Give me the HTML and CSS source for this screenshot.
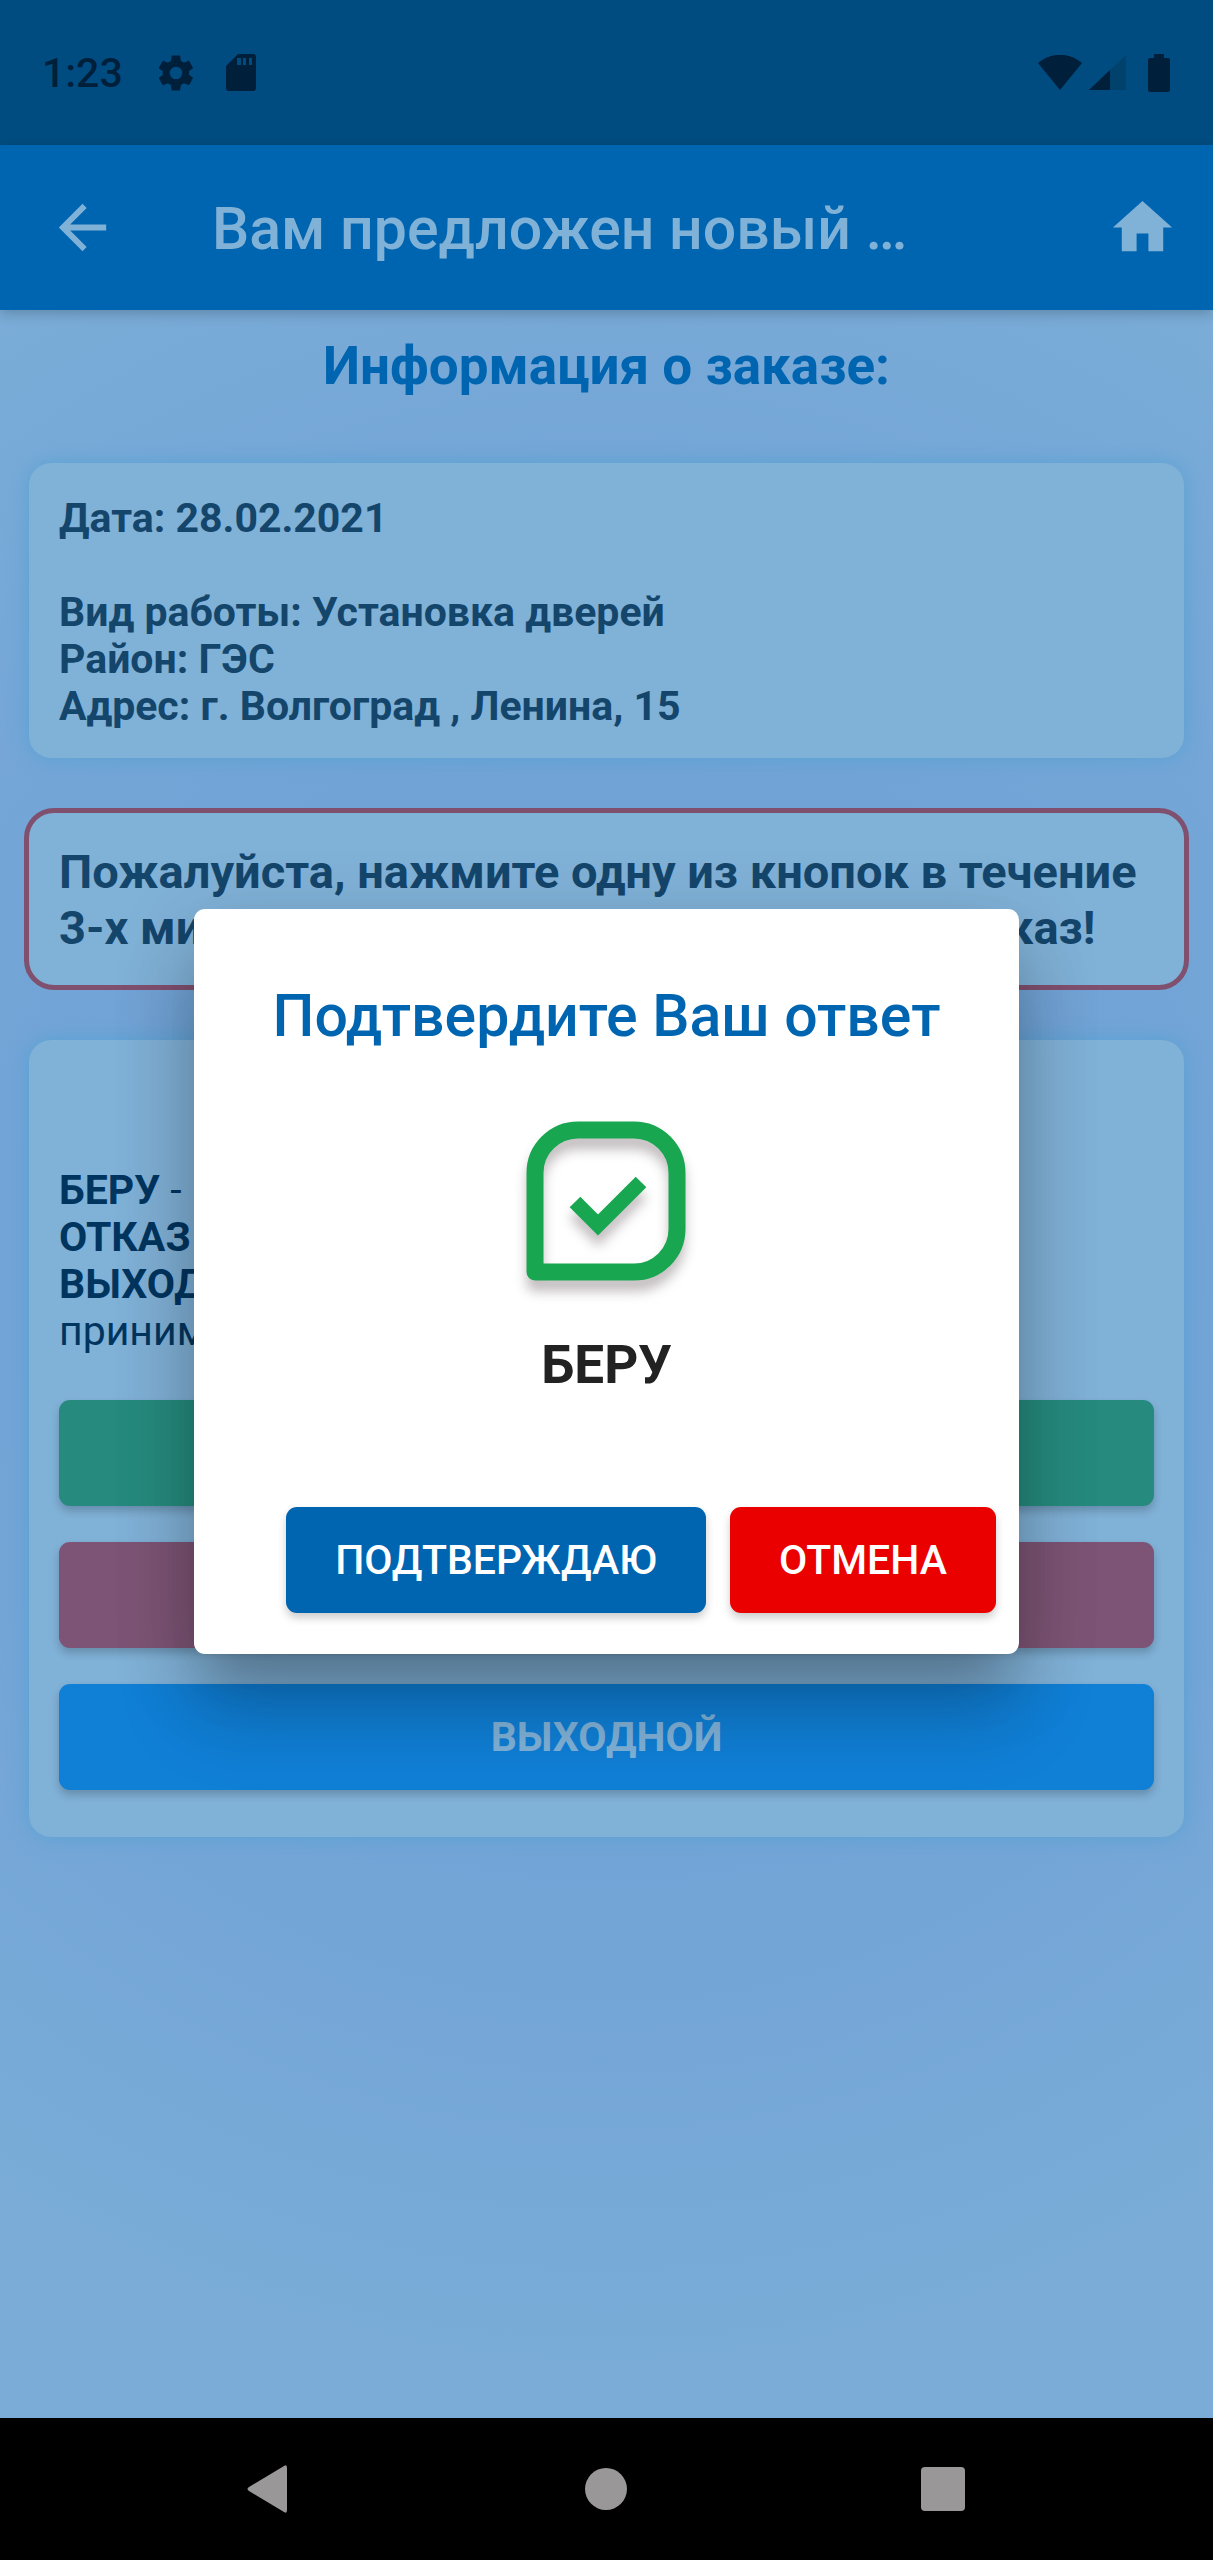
FILE: index.html
```html
<!DOCTYPE html>
<html lang="ru">
<head>
  <meta charset="UTF-8">
  <meta name="viewport" content="width=device-width, initial-scale=1.0">
  <title>Вам предложен новый заказ</title>
  <link rel="stylesheet" href="styles.css">
</head>
<body>
  <div class="status-bar">
    <span class="clock">1:23</span>
    <svg class="gear" viewBox="0 0 24 24"><path d="M19.400 13c0-.3.1-.6.1-1s0-.7-.1-1l2.100-1.600c.2-.2.2-.4.1-.6l-2-3.500c-.1-.2-.4-.3-.6-.2l-2.500 1c-.5-.4-1.100-.7-1.700-1l-.4-2.600c0-.3-.2-.5-.4-.5h-4c-.3 0-.5.2-.5.5l-.4 2.600c-.6.3-1.200.6-1.700 1l-2.500-1c-.2-.1-.5 0-.6.2l-2 3.500c-.1.2-.1.5.1.6L4.500 11c0 .3-.1.7-.1 1s0 .7.1 1l-2.100 1.600c-.2.200-.2.400-.1.600l2 3.500c.1.200.4.300.6.200l2.500-1c.5.400 1.100.700 1.700 1l.4 2.600c0 .3.200.5.500.5h4c.2 0 .4-.2.400-.5l.4-2.600c.6-.3 1.200-.6 1.700-1l2.500 1c.2.1.5 0 .6-.2l2-3.500c.1-.2.1-.4-.1-.6zM12 15.600a3.600 3.600 0 1 1 0-7.200 3.600 3.600 0 0 1 0 7.200z"/></svg>
    <svg class="sd-card" viewBox="0 0 30 37"><path fill-rule="evenodd" d="M12 0h15a3 3 0 0 1 3 3v31a3 3 0 0 1-3 3H3a3 3 0 0 1-3-3V12zM11 4v7h4V4zm6 0v7h3V4zm6 0v7h3V4z"/></svg>
    <svg class="wifi" viewBox="0 0 44 35"><path d="M0 8C13-3 31-3 44 8L22 35z"/></svg>
    <svg class="signal" viewBox="0 0 37 35"><path class="signal-rest" d="M37 0v35H0z"/><path d="M21 15v20H0z"/></svg>
    <svg class="battery" viewBox="0 0 22 38"><path d="M6 0h10v4h4a2 2 0 0 1 2 2v30a2 2 0 0 1-2 2H2a2 2 0 0 1-2-2V6a2 2 0 0 1 2-2h4z"/></svg>
  </div>

  <header class="app-bar">
    <button class="icon-button" aria-label="Назад">
      <svg viewBox="0 0 24 24"><path d="M20 11H7.830l5.590-5.590L12 4l-8 8 8 8 1.410-1.410L7.830 13H20v-2z"/></svg>
    </button>
    <h1>Вам предложен новый …</h1>
    <a class="icon-button" href="#" aria-label="На главную">
      <svg viewBox="0 0 24 24"><path d="M10 20v-6h4v6h5v-8h3L12 3 2 12h3v8z"/></svg>
    </a>
  </header>

  <main class="order">
    <h2 class="order-title">Информация о заказе:</h2>

    <section class="card info">
      <p>Дата: 28.02.2021</p>
      <br>
      <p>Вид работы: Установка дверей</p>
      <p>Район: ГЭС</p>
      <p>Адрес: г. Волгоград , Ленина, 15</p>
    </section>

    <p class="notice">Пожалуйста, нажмите одну из кнопок в течение 3-х минут, иначе Вы не получите новый заказ!</p>

    <section class="card answers">
      <h3>Варианты ответа:</h3>
      <p><b>БЕРУ</b> - Вы берёте заказ</p>
      <p><b>ОТКАЗ</b> - Вы не берёте заказ</p>
      <p><b>ВЫХОДНОЙ</b> - сегодня Вы не</p>
      <p>принимаете заказы</p>
      <div class="answer-buttons">
        <button class="button take">БЕРУ</button>
        <button class="button refuse">ОТКАЗ</button>
        <button class="button day-off">ВЫХОДНОЙ</button>
      </div>
    </section>

    <div class="overlay">
      <div class="dialog" role="dialog" aria-modal="true" aria-labelledby="dialogTitle">
        <h2 id="dialogTitle">Подтвердите Ваш ответ</h2>
        <svg class="check" viewBox="0 0 160 160">
          <path d="M9 151V52A43 43 0 0 1 52 9h56a43 43 0 0 1 43 43v56a43 43 0 0 1-43 43z"/>
          <path d="M49 81l23 23 43-43" stroke-width="15" stroke-linejoin="miter"/>
        </svg>
        <p class="choice">БЕРУ</p>
        <div class="dialog-buttons">
          <button class="button confirm">ПОДТВЕРЖДАЮ</button>
          <button class="button cancel">ОТМЕНА</button>
        </div>
      </div>
    </div>
  </main>

  <nav class="nav-bar">
    <button aria-label="Назад"><svg viewBox="0 0 48 48"><path d="M42 3v42q0 4-3 2L4 26q-3-2 0-4L39 1q3-2 3 2z"/></svg></button>
    <button aria-label="Домой"><svg viewBox="0 0 48 48"><circle cx="24" cy="24" r="21"/></svg></button>
    <button aria-label="Обзор"><svg viewBox="0 0 48 48"><rect x="2" y="2" width="44" height="44" rx="4"/></svg></button>
  </nav>
</body>
</html>
```

FILE: styles.css
```css
* {
  box-sizing: border-box;
  margin: 0;
  padding: 0;
}
body {
  display: flex;
  flex-direction: column;
  min-height: 100vh;
  font-family: Roboto, sans-serif;
  font-size: 41px;
  line-height: 47px;
  background: #79aad7;
}
button {
  font-family: inherit;
  border: none;
  cursor: pointer;
}

/* status bar */
.status-bar {
  display: flex;
  align-items: center;
  height: 145px;
  padding: 0 43px 0 42px;
  background: #004c80;
  color: #001f3b;
  fill: #001f3b;
}
.clock {
  padding-top: 2px;
  margin-right: 32px;
  font-weight: 500;
}
.gear {
  width: 42px;
  height: 42px;
}
.sd-card {
  width: 30px;
  height: 37px;
  margin-left: 29px;
}
.wifi {
  width: 44px;
  height: 35px;
  margin-left: auto;
}
.signal {
  width: 37px;
  height: 35px;
  margin: 0 22px 0 7px;
}
.signal-rest {
  fill: #00426b;
}
.battery {
  width: 22px;
  height: 38px;
}

/* app bar */
.app-bar {
  display: flex;
  align-items: center;
  height: 165px;
  padding: 0 35px 0 47px;
  background: #0065b1;
  color: #80b2d8;
  box-shadow: 0 4px 12px rgba(0, 0, 0, 0.2);
  z-index: 1;
}
.app-bar h1 {
  flex: 1;
  padding-top: 2px;
  margin-left: 94px;
  font-size: 59px;
  line-height: 70px;
  font-weight: 500;
}
.icon-button {
  width: 71px;
  height: 71px;
  background: none;
}
.icon-button svg {
  display: block;
  fill: #80b2d8;
}

/* order */
.order {
  position: relative;
  flex: 1;
  padding: 25px 29px;
  background: radial-gradient(circle at 50% 45%, #6d9fd4, #74a5d7 55%, #7aacd7 85%);
}
.order-title {
  margin-bottom: 66px;
  font-size: 53px;
  line-height: 62px;
  text-align: center;
  color: #0065b1;
}
.card {
  padding: 32px 30px 28px;
  border-radius: 22px;
  background: #80b1d7;
  box-shadow: 0 0 20px #58a2d3;
}
.info {
  font-weight: 700;
  color: #14456b;
}
.notice {
  margin: 50px -5px;
  padding: 31px 30px 29px;
  border: 5px solid #80506f;
  border-radius: 30px;
  background: #80b1d7;
  font-size: 47px;
  line-height: 56px;
  font-weight: 700;
  color: #14456b;
}
.answers {
  padding-bottom: 47px;
  color: #00355f;
}
.answers h3 {
  margin-bottom: 48px;
  font-size: 41px;
  text-align: center;
}
.answer-buttons {
  display: flex;
  flex-direction: column;
  gap: 36px;
  margin-top: 45px;
}
.button {
  height: 106px;
  padding: 0 49px;
  border-radius: 11px;
  font-size: 41px;
  font-weight: 500;
  color: #fff;
  box-shadow: 0 5px 8px rgba(0, 0, 0, 0.2);
}
.answer-buttons .button {
  font-weight: 700;
  color: #80b2d8;
}
.take {
  background: #268b7e;
}
.refuse {
  background: #7d5475;
}
.day-off {
  background: #107fd6;
}

/* dialog */
.overlay {
  position: absolute;
  inset: -165px 0 0;
  display: flex;
  align-items: center;
  justify-content: center;
  z-index: 2;
}
.dialog {
  display: flex;
  flex-direction: column;
  align-items: center;
  width: 68%;
  padding: 72px 23px 41px;
  border-radius: 11px;
  background: #fff;
  box-shadow: 0 32px 44px -20px rgba(0, 0, 0, 0.12), 0 60px 80px 0 rgba(0, 0, 0, 0.2), 0 20px 80px 10px rgba(0, 0, 0, 0.1);
}
.dialog h2 {
  font-size: 59px;
  line-height: 70px;
  font-weight: 500;
  color: #0065b1;
}
.check {
  width: 160px;
  height: 160px;
  margin: 70px 0 53px;
  overflow: visible;
  fill: none;
  stroke: #18a650;
  stroke-width: 17px;
  stroke-linejoin: round;
  filter: drop-shadow(0 11px 6px rgba(40, 20, 30, 0.28));
}
.choice {
  font-size: 53px;
  line-height: 62px;
  font-weight: 700;
  color: #222;
}
.dialog-buttons {
  display: flex;
  gap: 24px;
  align-self: flex-end;
  margin-top: 111px;
}
.confirm {
  background: #0065b1;
}
.cancel {
  background: #eb0000;
}

/* system navigation */
.nav-bar {
  display: flex;
  align-items: center;
  justify-content: space-around;
  height: 142px;
  padding: 0 102px 0 100px;
  background: #000;
}
.nav-bar button {
  width: 48px;
  height: 48px;
  background: none;
}
.nav-bar svg {
  display: block;
  fill: #9a9798;
}
```
